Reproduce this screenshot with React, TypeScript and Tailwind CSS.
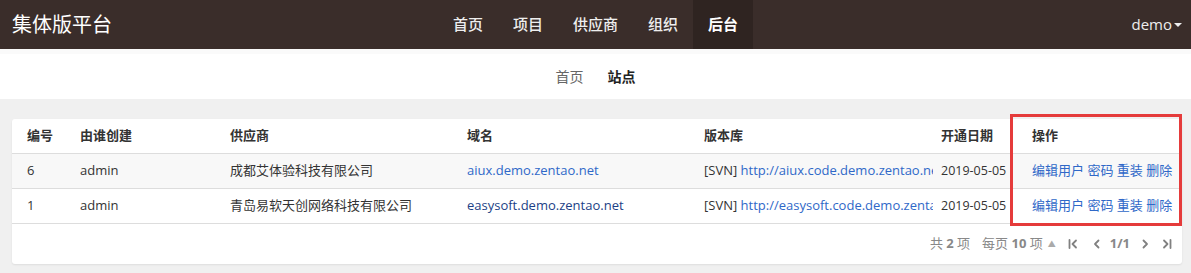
import React from 'react';

const navItems = ['首页', '项目', '供应商', '组织'];

const rows = [
  {
    id: '6',
    creator: 'admin',
    vendor: '成都艾体验科技有限公司',
    domain: 'aiux.demo.zentao.net',
    repo: 'http://aiux.code.demo.zentao.net',
    date: '2019-05-05',
    visited: false,
  },
  {
    id: '1',
    creator: 'admin',
    vendor: '青岛易软天创网络科技有限公司',
    domain: 'easysoft.demo.zentao.net',
    repo: 'http://easysoft.code.demo.zentao.net',
    date: '2019-05-05',
    visited: true,
  },
];

const cols = 'grid grid-cols-[60px_150px_237px_237px_237px_91px_158px]';

const PagerIcon: React.FC<{ kind: 'first' | 'prev' | 'next' | 'last' }> = ({ kind }) => (
  <svg width="10" height="12" viewBox="0 0 10 12" fill="none" stroke="#808080" strokeWidth="1.8" strokeLinecap="round" strokeLinejoin="round">
    {kind === 'first' && (
      <>
        <path d="M1.5 2v8" />
        <path d="M8 2.5L4.5 6 8 9.5" />
      </>
    )}
    {kind === 'prev' && <path d="M6.5 2.5L3 6l3.5 3.5" />}
    {kind === 'next' && <path d="M3.5 2.5L7 6 3.5 9.5" />}
    {kind === 'last' && (
      <>
        <path d="M2 2.5L5.5 6 2 9.5" />
        <path d="M8.5 2v8" />
      </>
    )}
  </svg>
);

const App: React.FC = () => {
  return (
    <div
      className="min-h-[273px] bg-[#f0f0f0] text-[13px] text-[#333]"
      style={{ fontFamily: '"Open Sans", "Noto Sans CJK SC", sans-serif' }}
    >
      {/* Top bar */}
      <header className="h-[49px] bg-[#3a2d2a] grid grid-cols-[1fr_auto_1fr] items-center">
        <div className="pl-[12px] text-[20px] text-white leading-none">集体版平台</div>
        <nav className="flex h-full">
          {navItems.map((item) => (
            <a key={item} className="flex items-center px-[15px] h-full text-[15px] text-[#eee] font-medium">
              {item}
            </a>
          ))}
          <a className="flex items-center px-[15px] h-full text-[15px] text-white font-bold bg-[#2f2421]">后台</a>
        </nav>
        <div className="flex items-center justify-end pr-[9px] text-[15px] text-[#eee]">
          <span>demo</span>
          <span className="ml-[2px] w-0 h-0 border-l-[4px] border-r-[4px] border-t-[4px] border-l-transparent border-r-transparent border-t-[#eee]" />
        </div>
      </header>

      {/* Sub nav */}
      <div className="h-[50px] bg-white border-t-[5px] border-t-[#fafafa] flex items-center justify-center text-[14px]">
        <a className="px-[12px] text-[#666]">首页</a>
        <a className="px-[12px] font-bold text-[#222]">站点</a>
      </div>

      {/* Table card */}
      <div className="relative ml-[12px] mt-[20px] w-[1170px] bg-white rounded-[3px] shadow-[0_1px_2px_rgba(0,0,0,0.08)]">
        <div className={`${cols} h-[35px] items-center font-bold border-b border-[#ddd]`}>
          <div className="pl-[15px]">编号</div>
          <div className="pl-[8px]">由谁创建</div>
          <div className="pl-[8px]">供应商</div>
          <div className="pl-[8px]">域名</div>
          <div className="pl-[8px]">版本库</div>
          <div className="pl-[8px]">开通日期</div>
          <div className="pl-[8px]">操作</div>
        </div>
        {rows.map((r, i) => (
          <div
            key={r.id}
            className={`${cols} h-[35px] items-center border-b border-[#ddd] ${i === 0 ? 'bg-[#f8f8f8]' : 'bg-white'}`}
          >
            <div className="pl-[15px]">{r.id}</div>
            <div className="pl-[8px]">{r.creator}</div>
            <div className="pl-[8px]">{r.vendor}</div>
            <div className="pl-[8px]">
              <a className={r.visited ? 'text-[#1c3f86]' : 'text-[#2f68c8]'}>{r.domain}</a>
            </div>
            <div className="pl-[8px] overflow-hidden whitespace-nowrap">
              [SVN] <a className="text-[#2f68c8]">{r.repo}</a>
            </div>
            <div className="pl-[8px] whitespace-nowrap text-[12.5px]">{r.date}</div>
            <div className="pl-[8px] text-[#2f68c8] whitespace-nowrap">编辑用户 密码 重装 删除</div>
          </div>
        ))}

        {/* Pager */}
        <div className="h-[40px] flex items-center justify-end pr-[10px] text-[13px] text-[#888]">
          <span>
            共 <b>2</b> 项
          </span>
          <span className="ml-[12px]">
            每页 <b>10</b> 项
          </span>
          <span className="ml-[5px] text-[8px] text-[#aaa]">▲</span>
          <span className="ml-[12px] flex"><PagerIcon kind="first" /></span>
          <span className="ml-[14px] flex"><PagerIcon kind="prev" /></span>
          <b className="ml-[8px]">1/1</b>
          <span className="ml-[10px] flex"><PagerIcon kind="next" /></span>
          <span className="ml-[12px] flex"><PagerIcon kind="last" /></span>
        </div>

        {/* Highlight box */}
        <div className="absolute left-[998px] top-[-5px] w-[172px] h-[112px] border-[3px] border-[#e53b3b] pointer-events-none" />
      </div>
    </div>
  );
};

export default App;
